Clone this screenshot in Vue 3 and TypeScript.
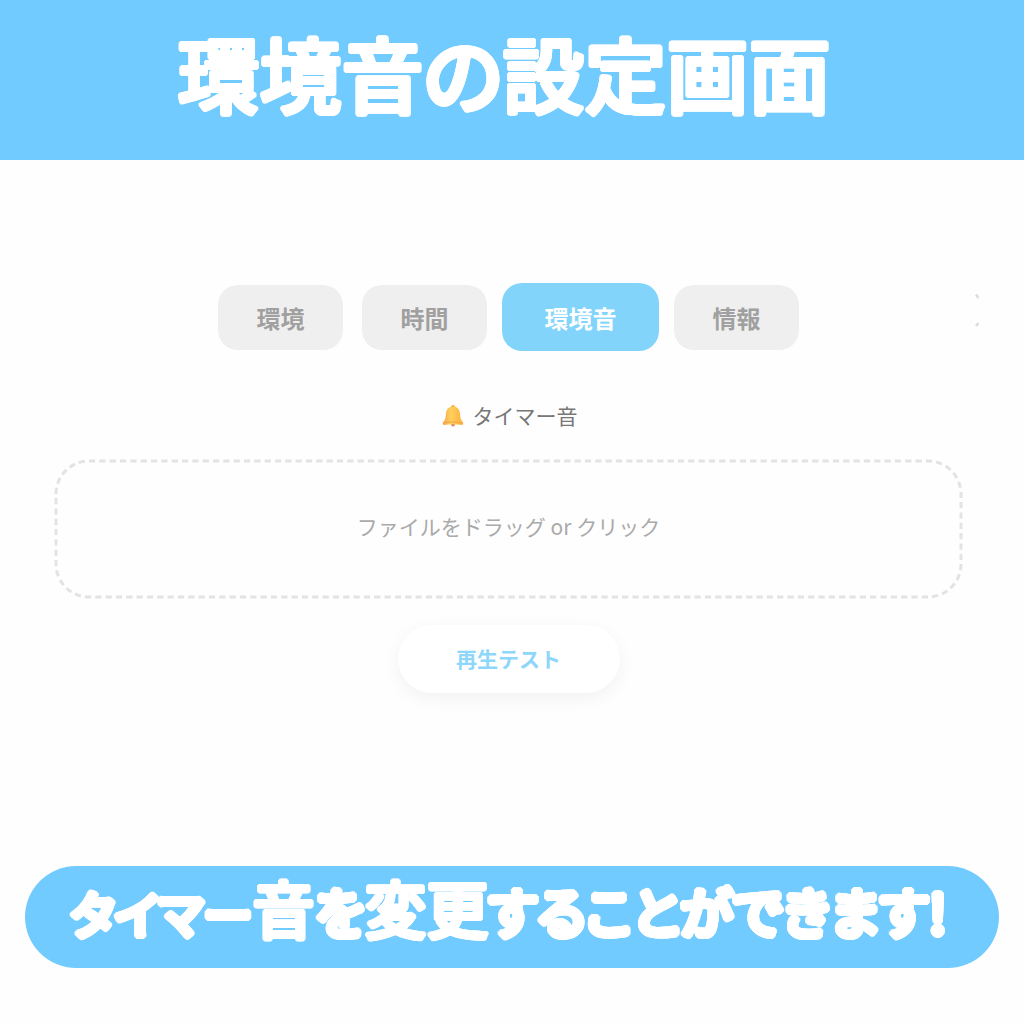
<script setup lang="ts">
import { ref } from 'vue'

interface Tab {
  id: string
  label: string
}

interface Run {
  text: string
  kind: 'katakana' | 'kanji' | 'hiragana'
}

const tabs: Tab[] = [
  { id: 'environment', label: '環境' },
  { id: 'time', label: '時間' },
  { id: 'sound', label: '環境音' },
  { id: 'info', label: '情報' },
]

const caption: Run[] = [
  { text: 'タイマー', kind: 'katakana' },
  { text: '音', kind: 'kanji' },
  { text: 'を', kind: 'hiragana' },
  { text: '変更', kind: 'kanji' },
  { text: 'することができます!', kind: 'hiragana' },
]

const activeTab = ref('sound')
</script>

<template>
  <div class="page">
    <header class="banner">
      <h1 class="title">環境音の設定画面</h1>
    </header>

    <main class="panel">
      <div class="tab-row">
        <nav class="tabs">
          <button
            v-for="tab in tabs"
            :key="tab.id"
            type="button"
            class="tab"
            :class="{ active: tab.id === activeTab }"
            @click="activeTab = tab.id"
          >
            {{ tab.label }}
          </button>
        </nav>
        <svg class="edge-mark" width="6" height="36" viewBox="0 0 6 36" aria-hidden="true">
          <path d="M1 1.500l2.500 3.500M3.500 30l-2.500 3" fill="none" stroke="#dcdcdc" stroke-width="2.500" />
        </svg>
      </div>

      <h2 class="label">
        <svg class="bell" width="22" height="24" viewBox="0 0 22 24" aria-hidden="true">
          <defs>
            <linearGradient id="bell-body" x1="0" y1="0" x2="1" y2="0">
              <stop offset="0" stop-color="#f7a550" />
              <stop offset="0.4" stop-color="#ffd05c" />
              <stop offset="1" stop-color="#ffae3c" />
            </linearGradient>
          </defs>
          <circle cx="11" cy="21.500" r="2" fill="#d9905a" />
          <circle cx="11" cy="4" r="2" fill="#f7a93f" />
          <path
            d="M11 3.500c-4.500 0-6.500 3-7 7-.4 5-1 6.500-3 9-.6 1 0 2.500 1.200 2.500 6-1 11.600-1 17.600 0 1.200 0 1.800-1.500 1.200-2.500-2-2.500-2.600-4-3-9-.5-4-2.500-7-7-7z"
            fill="url(#bell-body)"
          />
          <path d="M1 20.500c6-2 14-2 20 0" fill="none" stroke="#f3a24a" stroke-width="1" />
        </svg>
        <span>タイマー音</span>
      </h2>

      <label class="drop-zone" for="timer-sound">
        <svg class="outline" width="100%" height="100%" aria-hidden="true">
          <rect class="outline-rect" x="2" y="2" rx="33" pathLength="1960" />
        </svg>
        <span>ファイルをドラッグ or クリック</span>
        <input id="timer-sound" class="file-input" type="file" accept="audio/*" />
      </label>

      <button type="button" class="play">再生テスト</button>
    </main>

    <footer class="caption">
      <p class="caption-text">
        <span v-for="run in caption" :key="run.text" :class="run.kind">{{ run.text }}</span>
      </p>
    </footer>
  </div>
</template>

<style>
body {
  margin: 0;
  background: #fefefe;
}
</style>

<style scoped>
.page {
  display: flex;
  flex-direction: column;
  min-height: 100vh;
  box-sizing: border-box;
  padding-bottom: 56px;
  font-family: 'Noto Sans CJK JP', sans-serif;
}

.banner {
  display: flex;
  justify-content: center;
  align-items: center;
  height: 160px;
  box-sizing: border-box;
  padding: 0 16px 16px 0;
  background: #72cbff;
}

.title,
.caption-text {
  margin: 0;
  color: #fff;
  font-weight: 500;
  font-feature-settings: 'palt';
  white-space: nowrap;
}

/* A ring of solid shadows thickens the strokes and rounds their ends. */
.title,
.kanji {
  text-shadow:
    2px 0 #fff,
    -2px 0 #fff,
    0 2px #fff,
    0 -2px #fff,
    2px 1px #fff,
    2px -1px #fff,
    -2px 1px #fff,
    -2px -1px #fff,
    1px 2px #fff,
    -1px 2px #fff,
    1px -2px #fff,
    -1px -2px #fff;
}

.katakana,
.hiragana {
  text-shadow:
    3px 0 #fff,
    -3px 0 #fff,
    0 3px #fff,
    0 -3px #fff,
    3px 1px #fff,
    3px -1px #fff,
    -3px 1px #fff,
    -3px -1px #fff,
    1px 3px #fff,
    -1px 3px #fff,
    1px -3px #fff,
    -1px -3px #fff,
    2px 2px #fff,
    -2px 2px #fff,
    2px -2px #fff,
    -2px -2px #fff;
}

.title {
  font-size: 82px;
  line-height: 96px;
}

.panel {
  display: flex;
  flex-direction: column;
  align-items: center;
  flex: 1;
  padding: 123px 61px 0 54px;
}

.tab-row {
  position: relative;
  display: flex;
  justify-content: center;
  width: 100%;
}

.tabs {
  display: flex;
  align-items: center;
  gap: 19px;
  height: 68px;
}

.tab {
  min-width: 125px;
  height: 65px;
  padding: 2px 36px 0;
  border: 0;
  border-radius: 20px;
  background: #efefef;
  color: #a0a0a0;
  font-family: inherit;
  font-size: 24px;
  font-weight: 700;
  line-height: 32px;
  cursor: pointer;
}

.tab.active {
  min-width: 157px;
  height: 68px;
  margin: 0 -4px;
  background: #82d4fb;
  color: #fff;
}

.edge-mark {
  position: absolute;
  top: 10px;
  right: -18px;
}

.label {
  display: flex;
  align-items: center;
  gap: 9px;
  margin: 48px 0 0;
  padding-left: 2px;
  color: #777;
  font-size: 21px;
  font-weight: 400;
  line-height: 32px;
}

.drop-zone {
  position: relative;
  display: flex;
  align-items: center;
  justify-content: center;
  width: 100%;
  height: 140px;
  box-sizing: border-box;
  margin-top: 28px;
  padding-bottom: 6px;
  color: #aaa;
  font-size: 21px;
  line-height: 32px;
  cursor: pointer;
}

.outline {
  position: absolute;
  inset: 0;
}

.outline-rect {
  width: calc(100% - 4px);
  height: calc(100% - 4px);
  fill: none;
  stroke: #e3e3e3;
  stroke-width: 3px;
  stroke-dasharray: 6 4;
}

.file-input {
  position: absolute;
  width: 1px;
  height: 1px;
  opacity: 0;
}

.play {
  width: 222px;
  height: 68px;
  margin-top: 26px;
  padding: 0 0 2px;
  border: 0;
  border-radius: 34px;
  background: #fff;
  box-shadow: 0 5px 18px rgba(0, 0, 0, 0.05);
  color: #8ed6fa;
  font-family: inherit;
  font-size: 21px;
  font-weight: 700;
  line-height: 32px;
  cursor: pointer;
}

.caption {
  display: flex;
  justify-content: center;
  align-items: center;
  height: 102px;
  box-sizing: border-box;
  margin: 0 25px;
  padding: 0 6px 0 0;
  border-radius: 51px;
  background: #72cbff;
}

.caption-text {
  line-height: 72px;
}

.katakana {
  font-size: 50px;
}

.hiragana {
  font-size: 54px;
}

.kanji {
  font-size: 62px;
}
</style>
